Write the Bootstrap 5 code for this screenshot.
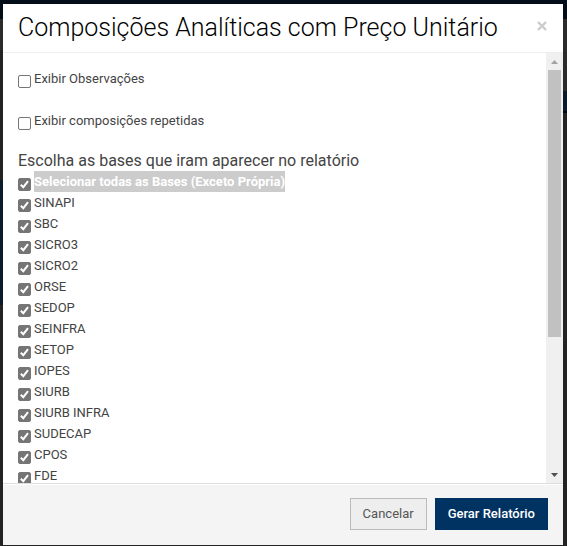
<!DOCTYPE html>
<html lang="pt-BR">
<head>
<meta charset="utf-8">
<meta name="viewport" content="width=device-width, initial-scale=1">
<title>Composições Analíticas com Preço Unitário</title>
<link href="https://cdn.jsdelivr.net/npm/bootstrap@5.3.0/dist/css/bootstrap.min.css" rel="stylesheet">
<style>
  body {
    font: 13px/21px Roboto, "Liberation Sans", sans-serif;
    color: #444;
    background:
      linear-gradient(#020d18 19px, #2b2b2b 19px 91px, #0b1b29 91px 111px, #000810 111px 113px, #232323 113px) right / 50% 100% no-repeat,
      linear-gradient(#020d18 19px, #2b2b2b 19px 50px, #232323 50px 180px, #0b1b29 180px 305px, #232323 305px);
  }
  .page { padding: 4px 4px 1px 3px; }
  .dialog-head { padding: 0 16px 0 15px; height: 49px; border-bottom: 1px solid #eee; }
  .dialog-head h1 { font-size: 25px; line-height: 48px; font-weight: 300; color: #000; }
  .dialog-close { color: #ccc; line-height: 0; }
  .dialog-scroll { padding: 15px 15px 0; overflow-y: auto; scrollbar-width: none; }
  .dialog-scroll::-webkit-scrollbar { display: none; }
  .option { gap: 3px; }
  .option + .option.apart { margin-top: 21px; }
  .dialog-scroll h2 { font-size: 16px; line-height: 20px; font-weight: 400; margin: 20px 0 0; }
  .tick {
    appearance: none; flex: none; width: 13px; height: 13px; margin: 7px 0 0;
    border: 1px solid #767676; border-radius: 2px; background: #fff;
  }
  .tick:checked {
    background: #757575 url("data:image/svg+xml,%3Csvg xmlns='http://www.w3.org/2000/svg' viewBox='0 0 11 11'%3E%3Cpath d='M1.8 5.8 4.3 8.2 9 2.2' fill='none' stroke='white' stroke-width='2'/%3E%3C/svg%3E") center / 11px 11px no-repeat;
  }
  .chosen { background: #ccc; color: #fff; font-weight: 700; }
  .rail { width: 17px; background: #f0f0f0; padding: 0 2px; }
  .rail-end { height: 17px; }
  .rail-thumb { height: 62%; background: #c1c1c1; }
  .dialog-foot { background: #f4f4f4; border-top: 1px solid #ddd; box-shadow: inset 0 1px 0 #fff; padding: 14px 15px 15px; gap: 8px; }
  .dialog-foot .btn { font-size: 13px; line-height: 20px; padding: 5px 12px; border-radius: 0; }
  .btn-cancel, .btn-cancel:hover { background: #eee; border-color: #bbb; color: #555; }
  .btn-report, .btn-report:hover { background: #003262; border-color: #003262; color: #fff; font-weight: 500; }
</style>
<script src="https://cdn.jsdelivr.net/npm/bootstrap@5.3.0/dist/js/bootstrap.bundle.min.js"></script>
</head>
<body>
<div class="page vh-100">
  <div class="bg-white h-100 d-flex flex-column" role="dialog" aria-labelledby="title">
    <header class="dialog-head d-flex align-items-center justify-content-between flex-shrink-0">
      <h1 id="title" class="m-0 text-nowrap">Composições Analíticas com Preço Unitário</h1>
      <button type="button" class="dialog-close border-0 bg-transparent p-0 pb-1" aria-label="Fechar">
        <svg width="10" height="10" viewBox="0 0 10 10"><path d="M1 1l8 8M9 1L1 9" stroke="currentColor" stroke-width="2.4"/></svg>
      </button>
    </header>
    <div class="d-flex flex-grow-1 overflow-hidden">
      <main class="dialog-scroll flex-grow-1">
        <div class="option d-flex"><input class="tick" type="checkbox" id="obs"><label for="obs">Exibir Observações</label></div>
        <div class="option apart d-flex"><input class="tick" type="checkbox" id="rep"><label for="rep">Exibir composições repetidas</label></div>
        <h2>Escolha as bases que iram aparecer no relatório</h2>
        <div class="option d-flex"><input class="tick" type="checkbox" id="all" checked><label class="chosen" for="all">Selecionar todas as Bases (Exceto Própria)</label></div>
        <div class="option d-flex"><input class="tick" type="checkbox" id="b1" checked><label for="b1">SINAPI</label></div>
        <div class="option d-flex"><input class="tick" type="checkbox" id="b2" checked><label for="b2">SBC</label></div>
        <div class="option d-flex"><input class="tick" type="checkbox" id="b3" checked><label for="b3">SICRO3</label></div>
        <div class="option d-flex"><input class="tick" type="checkbox" id="b4" checked><label for="b4">SICRO2</label></div>
        <div class="option d-flex"><input class="tick" type="checkbox" id="b5" checked><label for="b5">ORSE</label></div>
        <div class="option d-flex"><input class="tick" type="checkbox" id="b6" checked><label for="b6">SEDOP</label></div>
        <div class="option d-flex"><input class="tick" type="checkbox" id="b7" checked><label for="b7">SEINFRA</label></div>
        <div class="option d-flex"><input class="tick" type="checkbox" id="b8" checked><label for="b8">SETOP</label></div>
        <div class="option d-flex"><input class="tick" type="checkbox" id="b9" checked><label for="b9">IOPES</label></div>
        <div class="option d-flex"><input class="tick" type="checkbox" id="b10" checked><label for="b10">SIURB</label></div>
        <div class="option d-flex"><input class="tick" type="checkbox" id="b11" checked><label for="b11">SIURB INFRA</label></div>
        <div class="option d-flex"><input class="tick" type="checkbox" id="b12" checked><label for="b12">SUDECAP</label></div>
        <div class="option d-flex"><input class="tick" type="checkbox" id="b13" checked><label for="b13">CPOS</label></div>
        <div class="option d-flex"><input class="tick" type="checkbox" id="b14" checked><label for="b14">FDE</label></div>
      </main>
      <div class="rail d-flex flex-column flex-shrink-0" aria-hidden="true">
        <div class="rail-end d-flex align-items-center justify-content-center flex-shrink-0"><svg width="7" height="4" viewBox="0 0 7 4"><path d="M0 4 3.5 0 7 4z" fill="#a3a3a3"/></svg></div>
        <div class="rail-thumb"></div>
        <div class="rail-end d-flex align-items-center justify-content-center flex-shrink-0 mt-auto"><svg width="7" height="4" viewBox="0 0 7 4"><path d="M0 0 3.5 4 7 0z" fill="#505050"/></svg></div>
      </div>
    </div>
    <footer class="dialog-foot d-flex justify-content-end flex-shrink-0">
      <button type="button" class="btn btn-cancel">Cancelar</button>
      <button type="button" class="btn btn-report">Gerar Relatório</button>
    </footer>
  </div>
</div>
</body>
</html>
